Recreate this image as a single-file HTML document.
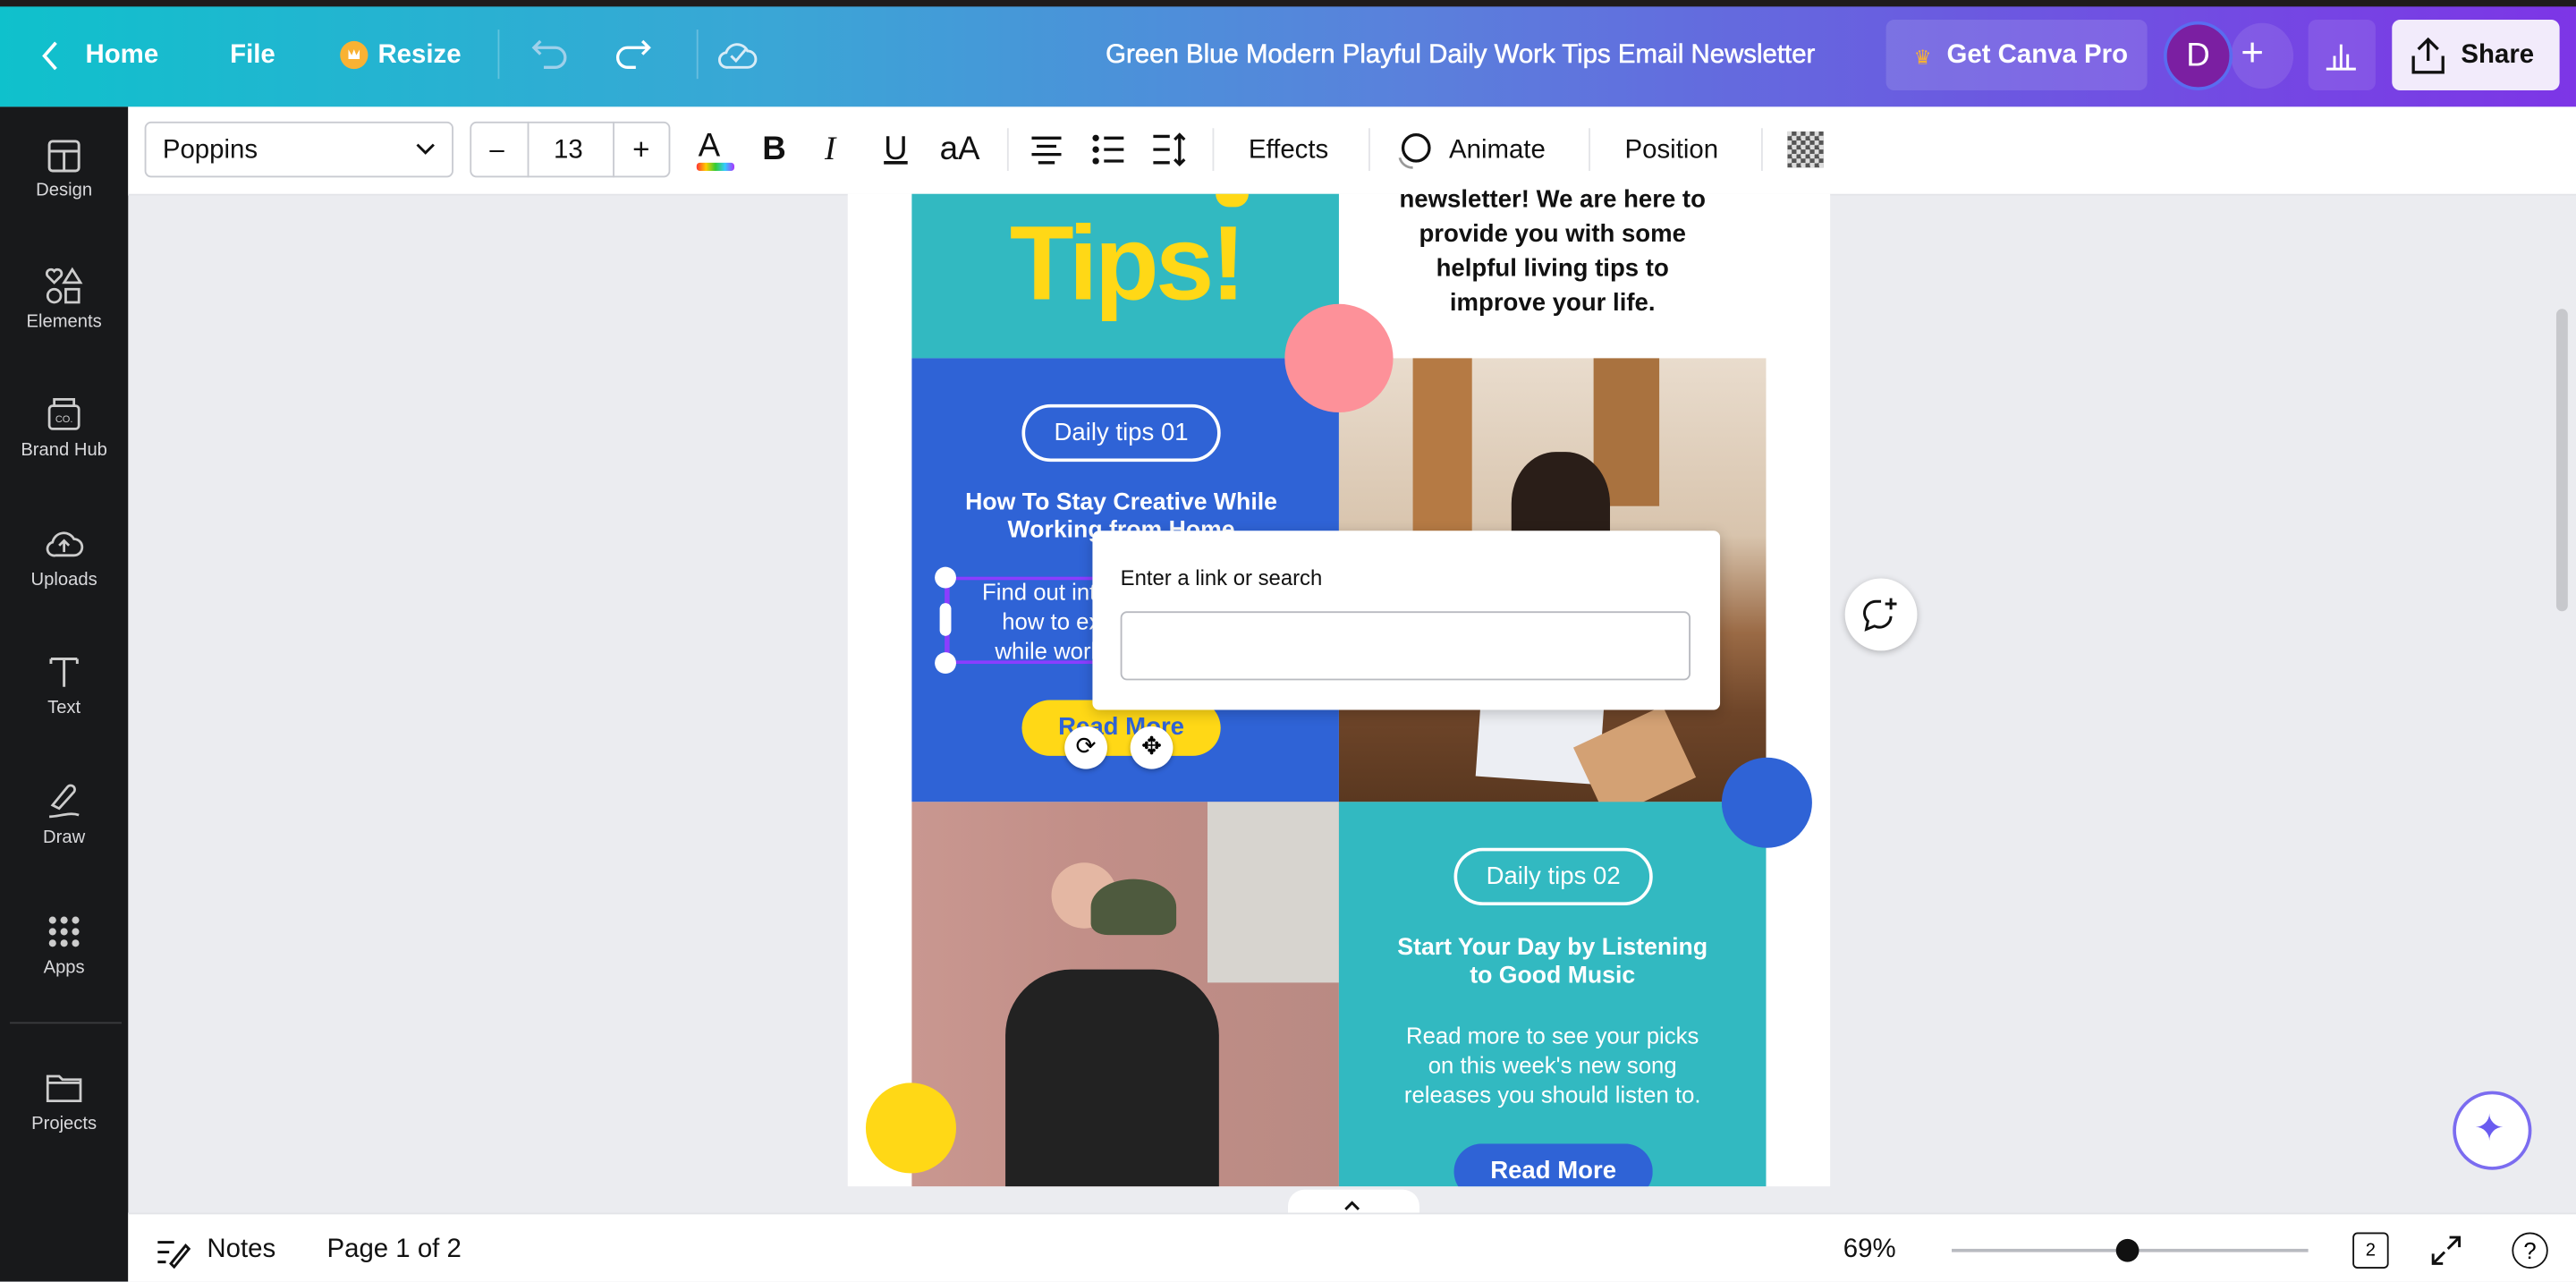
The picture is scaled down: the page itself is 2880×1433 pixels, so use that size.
<!DOCTYPE html>
<html><head><meta charset="utf-8"><style>
html,body{margin:0;padding:0;width:2880px;height:1432px;overflow:hidden;background:#ebecf0;font-family:"Liberation Sans",sans-serif}
#w{position:absolute;left:0;top:0;width:1568px;height:780px;transform:scale(1.83673);transform-origin:0 0;background:#ebecf0;overflow:hidden}
.a{position:absolute}
.hdr{left:0;top:0;width:1568px;height:65px;background:linear-gradient(90deg,#0fc1cc 0%,#3aa6d6 30%,#5a80dc 55%,#6a5ce0 75%,#7d35e6 100%)}
.top{left:0;top:0;width:1568px;height:4px;background:#1f1b1b}
.ht{color:#fff;font-size:16px;font-weight:bold;top:25px}
.side{left:0;top:65px;width:78px;height:715px;background:#18191b}
.si{width:78px;text-align:center;color:#d9d9dc;font-size:11px}
.si svg{display:block;margin:0 auto 4px}
.tb{left:78px;top:65px;width:1490px;height:53px;background:#fff;border-bottom:1px solid #e3e4e8}
.tt{font-size:16px;color:#111;top:83px}
.pg{left:516px;top:118px;width:598px;height:604px;background:#fff}
.c{text-align:center;font-family:"Liberation Sans",sans-serif}
.pill{border:2px solid #fff;border-radius:20px;color:#fff;font-size:15px;text-align:center;box-sizing:border-box}
.bot{left:78px;top:738px;width:1490px;height:42px;background:#fff;border-top:1px solid #e3e4e8}
</style></head><body><div id="w">
<div class="a hdr"></div><div class="a top"></div>
<svg class="a" style="left:24px;top:24px" width="14" height="20" viewBox="0 0 14 20"><path d="M10 2 L3 10 L10 18" stroke="#fff" stroke-width="2" fill="none"/></svg>
<div class="a ht" style="left:52px">Home</div>
<div class="a ht" style="left:140px">File</div>
<div class="a" style="left:207px;top:25px;width:17px;height:17px;border-radius:50%;background:#f9b233"></div>
<div class="a" style="left:212px;top:30px;width:7px;height:6px;background:#fff;clip-path:polygon(0 100%,0 0,30% 60%,50% 0,70% 60%,100% 0,100% 100%)"></div>
<div class="a ht" style="left:230px">Resize</div>
<div class="a" style="left:303px;top:18px;width:1px;height:30px;background:rgba(255,255,255,.25)"></div>
<svg class="a" style="left:323px;top:22px" width="24" height="22" viewBox="0 0 24 22"><path d="M6 3 L2 7 L6 11 M2 7 H15 a6 6 0 0 1 0 12 H8" stroke="#9fd0ea" stroke-width="1.8" fill="none"/></svg>
<svg class="a" style="left:373px;top:22px" width="24" height="22" viewBox="0 0 24 22"><path d="M18 3 L22 7 L18 11 M22 7 H9 a6 6 0 0 0 0 12 H14" stroke="#fff" stroke-width="1.8" fill="none"/></svg>
<div class="a" style="left:424px;top:18px;width:1px;height:30px;background:rgba(255,255,255,.25)"></div>
<svg class="a" style="left:436px;top:22px" width="26" height="22" viewBox="0 0 26 22"><path d="M7 19 H19 a5 5 0 0 0 0-10 a7 7 0 0 0-13 1 a4.5 4.5 0 0 0 1 9Z M9 12 l3 3 l6-7" stroke="#d8ecf7" stroke-width="1.6" fill="none"/></svg>
<div class="a ht" style="left:673px;font-weight:normal;font-size:16px;color:#fff;-webkit-text-stroke:.3px #fff">Green Blue Modern Playful Daily Work Tips Email Newsletter</div>
<div class="a" style="left:1148px;top:12px;width:159px;height:43px;border-radius:5px;background:rgba(255,255,255,.12)"></div>
<div class="a" style="left:1165px;top:28px;color:#f9b233;font-size:12px">♛</div>
<div class="a ht" style="left:1185px">Get Canva Pro</div>
<div class="a" style="left:1358px;top:14px;width:38px;height:40px;border-radius:50%;background:rgba(255,255,255,.1)"></div>
<div class="a" style="left:1317px;top:13px;width:38px;height:38px;border-radius:50%;background:#7b1fa2;border:2px solid #5a6cf0;color:#fff;font-size:20px;text-align:center;line-height:38px">D</div>
<div class="a" style="left:1364px;top:19px;color:#fff;font-size:24px">+</div>
<div class="a" style="left:1405px;top:12px;width:41px;height:43px;border-radius:5px;background:rgba(255,255,255,.1)"></div>
<svg class="a" style="left:1415px;top:24px" width="20" height="20" viewBox="0 0 20 20"><path d="M1 18 H19 M6 18 V10 M10 18 V3 M14 18 V9" stroke="#fff" stroke-width="1.6"/></svg>
<div class="a" style="left:1456px;top:12px;width:102px;height:43px;border-radius:5px;background:#f2ebfb"></div>
<svg class="a" style="left:1466px;top:21px" width="24" height="26" viewBox="0 0 24 26"><path d="M12 16 V3 M6 9 L12 3 L18 9 M3 13 V23 H21 V13" stroke="#111" stroke-width="1.8" fill="none"/></svg>
<div class="a ht" style="left:1498px;color:#111">Share</div>

<div class="a side"></div>
<div class="a si" style="left:0;top:84px"><svg width="22" height="22" viewBox="0 0 22 22"><rect x="2" y="2" width="18" height="18" rx="2" stroke="#ccc" stroke-width="1.6" fill="none"/><path d="M2 8 H20 M11 8 V20" stroke="#ccc" stroke-width="1.6"/></svg>Design</div>
<div class="a si" style="left:0;top:162px"><svg width="24" height="24" viewBox="0 0 24 24"><path d="M6 10 L2 6 a2.5 2.5 0 0 1 4-3 a2.5 2.5 0 0 1 4 3Z M17 2 l5 8 h-10Z" stroke="#ccc" stroke-width="1.5" fill="none"/><circle cx="6" cy="18" r="4" stroke="#ccc" stroke-width="1.5" fill="none"/><rect x="13" y="14" width="8" height="8" stroke="#ccc" stroke-width="1.5" fill="none"/></svg>Elements</div>
<div class="a si" style="left:0;top:240px"><svg width="24" height="24" viewBox="0 0 24 24"><rect x="3" y="7" width="18" height="14" rx="2" stroke="#ccc" stroke-width="1.5" fill="none"/><path d="M6 7 V3 H18 V7" stroke="#ccc" stroke-width="1.5" fill="none"/><text x="12" y="17" font-size="6" fill="#ccc" text-anchor="middle">CO.</text></svg>Brand Hub</div>
<div class="a si" style="left:0;top:319px"><svg width="24" height="24" viewBox="0 0 24 24"><path d="M7 19 H18 a5 5 0 0 0 0-10 a7 7 0 0 0-13 2 a4 4 0 0 0 2 8Z M12 17 V10 M9 13 L12 10 L15 13" stroke="#ccc" stroke-width="1.5" fill="none"/></svg>Uploads</div>
<div class="a si" style="left:0;top:397px"><svg width="24" height="24" viewBox="0 0 24 24"><path d="M4 4 H20 M12 4 V21 M4 4 V7 M20 4 V7" stroke="#ccc" stroke-width="1.6" fill="none"/></svg>Text</div>
<div class="a si" style="left:0;top:476px"><svg width="24" height="24" viewBox="0 0 24 24"><path d="M5 14 L14 3 a2 2 0 0 1 4 3 L9 16 Z M3 21 c6 0 12-3 18-1" stroke="#ccc" stroke-width="1.5" fill="none"/></svg>Draw</div>
<div class="a si" style="left:0;top:555px"><svg width="24" height="24" viewBox="0 0 24 24" fill="#ccc"><circle cx="5" cy="5" r="2.2"/><circle cx="12" cy="5" r="2.2"/><circle cx="19" cy="5" r="2.2"/><circle cx="5" cy="12" r="2.2"/><circle cx="12" cy="12" r="2.2"/><circle cx="19" cy="12" r="2.2"/><circle cx="5" cy="19" r="2.2"/><circle cx="12" cy="19" r="2.2"/><circle cx="19" cy="19" r="2.2"/></svg>Apps</div>
<div class="a" style="left:6px;top:622px;width:68px;height:1px;background:#3a3b3e"></div>
<div class="a si" style="left:0;top:650px"><svg width="24" height="24" viewBox="0 0 24 24"><path d="M2 5 H9 L11 7 H22 V20 H2Z M2 9 H22" stroke="#ccc" stroke-width="1.5" fill="none"/></svg>Projects</div>

<div class="a tb"></div>
<div class="a" style="left:88px;top:74px;width:188px;height:34px;border:1px solid #c9cbd1;border-radius:4px;box-sizing:border-box"></div>
<div class="a tt" style="left:99px">Poppins</div>
<svg class="a" style="left:252px;top:86px" width="14" height="10" viewBox="0 0 14 10"><path d="M2 2 L7 7 L12 2" stroke="#111" stroke-width="1.6" fill="none"/></svg>
<div class="a" style="left:286px;top:74px;width:122px;height:34px;border:1px solid #c9cbd1;border-radius:4px;box-sizing:border-box"></div>
<div class="a" style="left:321px;top:74px;width:1px;height:34px;background:#c9cbd1"></div>
<div class="a" style="left:373px;top:74px;width:1px;height:34px;background:#c9cbd1"></div>
<div class="a tt" style="left:298px">–</div>
<div class="a tt" style="left:337px">13</div>
<div class="a tt" style="left:385px;font-size:18px;top:81px">+</div>
<div class="a tt" style="left:425px;font-size:20px;top:78px">A</div>
<div class="a" style="left:424px;top:99px;width:23px;height:5px;border-radius:2px;background:linear-gradient(90deg,#f33,#fc0,#3c3,#3cf,#a3f)"></div>
<div class="a tt" style="left:464px;font-weight:bold;font-size:20px;top:80px">B</div>
<div class="a tt" style="left:502px;font-style:italic;font-size:20px;top:80px;font-family:'Liberation Serif',serif">I</div>
<div class="a tt" style="left:538px;text-decoration:underline;font-size:20px;top:80px">U</div>
<div class="a tt" style="left:572px;font-size:20px;top:80px">aA</div>
<div class="a" style="left:613px;top:78px;width:1px;height:26px;background:#e3e4e8"></div>
<svg class="a" style="left:626px;top:82px" width="22" height="18" viewBox="0 0 22 18"><path d="M2 2 H20 M5 7 H17 M2 12 H20 M6 17 H16" stroke="#111" stroke-width="1.8"/></svg>
<svg class="a" style="left:664px;top:82px" width="22" height="18" viewBox="0 0 22 18"><circle cx="3" cy="2" r="2" fill="#111"/><circle cx="3" cy="9" r="2" fill="#111"/><circle cx="3" cy="16" r="2" fill="#111"/><path d="M8 2 H20 M8 9 H20 M8 16 H20" stroke="#111" stroke-width="1.8"/></svg>
<svg class="a" style="left:700px;top:80px" width="24" height="22" viewBox="0 0 24 22"><path d="M2 3 H12 M2 11 H12 M2 19 H12 M18 2 V20 M15 5 L18 2 L21 5 M15 17 L18 20 L21 17" stroke="#111" stroke-width="1.8" fill="none"/></svg>
<div class="a" style="left:738px;top:78px;width:1px;height:26px;background:#e3e4e8"></div>
<div class="a tt" style="left:760px">Effects</div>
<div class="a" style="left:833px;top:78px;width:1px;height:26px;background:#e3e4e8"></div>
<svg class="a" style="left:848px;top:80px" width="28" height="24" viewBox="0 0 28 24"><circle cx="14" cy="10" r="8" stroke="#111" stroke-width="1.8" fill="none"/><path d="M4 16 a8 8 0 0 0 8 6" stroke="#999" stroke-width="1.5" fill="none"/></svg>
<div class="a tt" style="left:882px">Animate</div>
<div class="a" style="left:967px;top:78px;width:1px;height:26px;background:#e3e4e8"></div>
<div class="a tt" style="left:989px">Position</div>
<div class="a" style="left:1072px;top:78px;width:1px;height:26px;background:#e3e4e8"></div>
<div class="a" style="left:1088px;top:80px;width:22px;height:22px;background:repeating-conic-gradient(#555 0 25%,#ddd 0 50%) 0 0/5.5px 5.5px"></div>

<!-- page -->
<div class="a pg"></div>
<div class="a" style="left:555px;top:118px;width:260px;height:100px;background:#32b9c1"></div>
<div class="a" style="left:598px;top:117px;width:175px;font-size:64px;font-weight:bold;color:#ffd816;line-height:86px;text-align:center;letter-spacing:-2px">Tips!</div>
<div class="a" style="left:740px;top:118px;width:20px;height:8px;border-radius:0 0 10px 10px;background:#ffd816"></div>
<div class="a c" style="left:820px;top:111px;width:250px;font-size:15px;font-weight:bold;line-height:21px;color:#111">newsletter! We are here to<br>provide you with some<br>helpful living tips to<br>improve your life.</div>
<div class="a" style="left:555px;top:218px;width:260px;height:270px;background:#2f63d6"></div>
<div class="a" style="left:815px;top:218px;width:260px;height:270px;background:linear-gradient(180deg,#e9dccd 0%,#d8c4ad 40%,#9a6a45 62%,#6e4529 80%,#5a3820 100%)"></div>
<div class="a" style="left:860px;top:218px;width:36px;height:150px;background:#b57a44"></div>
<div class="a" style="left:970px;top:218px;width:40px;height:90px;background:#a9723f"></div>
<div class="a" style="left:920px;top:275px;width:60px;height:70px;border-radius:45% 45% 30% 30%;background:#2a1e18"></div>
<div class="a" style="left:900px;top:420px;width:75px;height:55px;background:#eceef3;transform:rotate(4deg)"></div>
<div class="a" style="left:965px;top:440px;width:60px;height:48px;background:#d3a174;transform:rotate(-25deg)"></div>
<div class="a" style="left:782px;top:185px;width:66px;height:66px;border-radius:50%;background:#fd9199"></div>
<div class="a pill" style="left:622px;top:246px;width:121px;height:35px;line-height:31px">Daily tips 01</div>
<div class="a c" style="left:560px;top:298px;width:245px;font-size:14.5px;font-weight:bold;color:#fff;line-height:17px">How To Stay Creative While<br>Working from Home</div>
<div class="a c" style="left:575px;top:351px;width:220px;font-size:14px;color:#fff;line-height:18px">Find out interesting ways on<br>how to explore creativity<br>while working from home.</div>
<div class="a" style="left:575px;top:351px;width:3px;height:52px;background:#8b3dff"></div>
<div class="a" style="left:575px;top:351px;width:90px;height:2px;background:#8b3dff"></div>
<div class="a" style="left:575px;top:402px;width:90px;height:2px;background:#8b3dff"></div>
<div class="a" style="left:569px;top:345px;width:13px;height:13px;border-radius:50%;background:#fff"></div>
<div class="a" style="left:569px;top:397px;width:13px;height:13px;border-radius:50%;background:#fff"></div>
<div class="a" style="left:572px;top:367px;width:7px;height:20px;border-radius:4px;background:#fff"></div>
<div class="a" style="left:622px;top:426px;width:121px;height:34px;border-radius:17px;background:#ffd816;color:#2f63d6;font-weight:bold;font-size:15px;text-align:center;line-height:34px">Read More</div>
<div class="a" style="left:648px;top:442px;width:26px;height:26px;border-radius:50%;background:#fff;box-shadow:0 1px 3px rgba(0,0,0,.3);text-align:center;line-height:26px;font-size:15px">⟳</div>
<div class="a" style="left:688px;top:442px;width:26px;height:26px;border-radius:50%;background:#fff;box-shadow:0 1px 3px rgba(0,0,0,.3);text-align:center;line-height:26px;font-size:15px">✥</div>

<div class="a" style="left:555px;top:488px;width:260px;height:234px;background:linear-gradient(90deg,#c99790 0%,#c28f88 40%,#b98a83 100%)"></div>
<div class="a" style="left:735px;top:488px;width:80px;height:110px;background:#d7d4cf"></div>
<div class="a" style="left:640px;top:525px;width:40px;height:40px;border-radius:50%;background:#e4b7a3"></div>
<div class="a" style="left:664px;top:535px;width:52px;height:34px;border-radius:50% 50% 20% 20%;background:#4e5a3e"></div>
<div class="a" style="left:612px;top:590px;width:130px;height:132px;border-radius:40px 40px 0 0;background:#222"></div>
<div class="a" style="left:815px;top:488px;width:260px;height:234px;background:#32b9c1"></div>
<div class="a" style="left:1048px;top:461px;width:55px;height:55px;border-radius:50%;background:#2f63d6"></div>
<div class="a" style="left:527px;top:659px;width:55px;height:55px;border-radius:50%;background:#ffd816"></div>
<div class="a pill" style="left:885px;top:516px;width:121px;height:35px;line-height:31px">Daily tips 02</div>
<div class="a c" style="left:820px;top:569px;width:250px;font-size:14.5px;font-weight:bold;color:#fff;line-height:17px">Start Your Day by Listening<br>to Good Music</div>
<div class="a c" style="left:820px;top:621px;width:250px;font-size:14px;color:#fff;line-height:18px">Read more to see your picks<br>on this week's new song<br>releases you should listen to.</div>
<div class="a" style="left:885px;top:696px;width:121px;height:34px;border-radius:17px;background:#2f63d6;color:#fff;font-weight:bold;font-size:15px;text-align:center;line-height:34px;clip-path:inset(0 0 8px 0)">Read More</div>

<!-- popup -->
<div class="a" style="left:665px;top:323px;width:382px;height:109px;background:#fff;border-radius:4px;box-shadow:0 2px 8px rgba(0,0,0,.2)"></div>
<div class="a" style="left:682px;top:344px;font-size:13px;color:#111">Enter a link or search</div>
<div class="a" style="left:682px;top:372px;width:347px;height:42px;border:1px solid #b8bac0;border-radius:4px;box-sizing:border-box"></div>

<div class="a" style="left:1123px;top:352px;width:44px;height:44px;border-radius:50%;background:#fff;box-shadow:0 1px 4px rgba(0,0,0,.25)"></div>
<svg class="a" style="left:1133px;top:362px" width="24" height="24" viewBox="0 0 24 24"><path d="M12 4 H9 a7 7 0 0 0-5 12 L3 21 L8 19 a7 7 0 0 0 10-6 M18 2 V9 M14.5 5.5 H21.5" stroke="#111" stroke-width="1.6" fill="none"/></svg>
<div class="a" style="left:1556px;top:188px;width:7px;height:184px;border-radius:4px;background:#c7c8cc"></div>
<div class="a" style="left:1495px;top:666px;width:44px;height:44px;border-radius:50%;background:#fff;box-shadow:0 0 0 2px #7b6cf0"></div>
<div class="a" style="left:1506px;top:674px;font-size:22px;color:#6a5cf0">✦</div>

<!-- bottom -->
<div class="a" style="left:784px;top:724px;width:80px;height:16px;border-radius:10px 10px 0 0;background:#fff"></div>
<svg class="a" style="left:817px;top:730px" width="12" height="8" viewBox="0 0 12 8"><path d="M2 6 L6 2 L10 6" stroke="#111" stroke-width="1.6" fill="none"/></svg>
<div class="a bot"></div>
<svg class="a" style="left:94px;top:752px" width="22" height="20" viewBox="0 0 22 20"><path d="M2 4 H12 M2 10 H9 M2 16 H7 M10 17 L19 6 L21 8 L12 19 Z" stroke="#111" stroke-width="1.6" fill="none"/></svg>
<div class="a" style="left:126px;top:752px;font-size:16px;color:#111">Notes</div>
<div class="a" style="left:199px;top:752px;font-size:16px;color:#111">Page 1 of 2</div>
<div class="a" style="left:1122px;top:752px;font-size:16px;color:#111">69%</div>
<div class="a" style="left:1188px;top:760px;width:217px;height:2px;background:#b8bac0"></div>
<div class="a" style="left:1288px;top:754px;width:14px;height:14px;border-radius:50%;background:#111"></div>
<div class="a" style="left:1432px;top:750px;width:22px;height:22px;border:1.6px solid #111;border-radius:3px;box-sizing:border-box;font-size:11px;text-align:center;line-height:20px">2</div>
<svg class="a" style="left:1478px;top:750px" width="22" height="22" viewBox="0 0 22 22"><path d="M13 3 H19 V9 M19 3 L12 10 M9 19 H3 V13 M3 19 L10 12" stroke="#111" stroke-width="1.6" fill="none"/></svg>
<div class="a" style="left:1529px;top:750px;width:22px;height:22px;border:1.6px solid #111;border-radius:50%;box-sizing:border-box;font-size:14px;text-align:center;line-height:20px">?</div>
</div></body></html>
